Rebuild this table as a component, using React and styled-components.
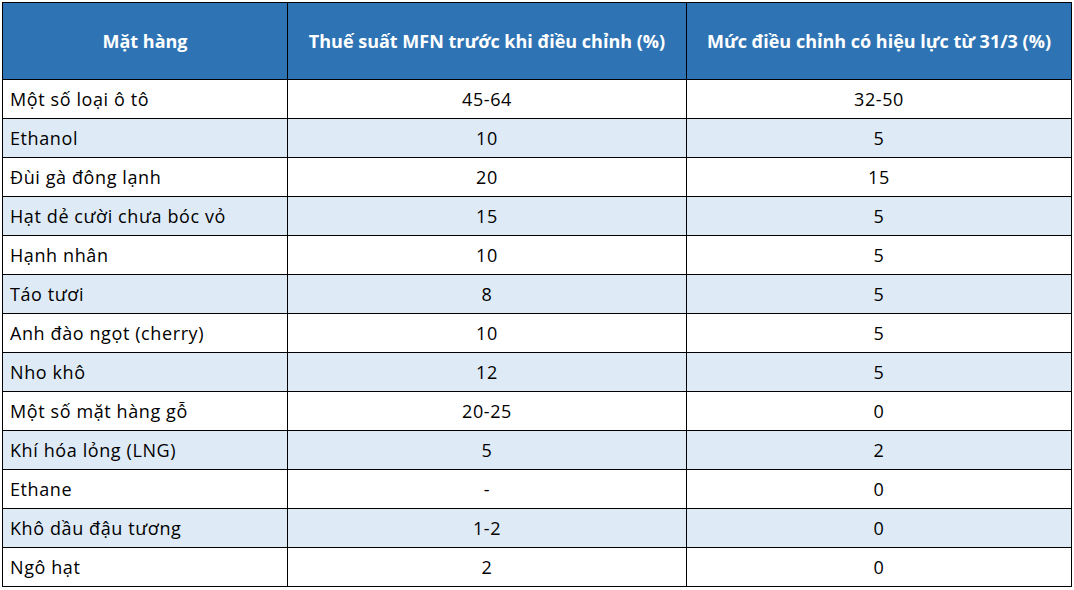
import React from 'react';
import styled, { createGlobalStyle } from 'styled-components';

const GlobalStyle = createGlobalStyle`
  html, body {
    margin: 0;
    padding: 0;
    background: #ffffff;
  }
  body {
    font-family: "Open Sans", "Liberation Sans", sans-serif;
  }
`;

const Page = styled.div`
  padding: 2px 0 0 2px;
`;

const Table = styled.table`
  width: 1069px;
  border-collapse: collapse;
  table-layout: fixed;
  font-family: "Open Sans", "Noto Sans", sans-serif;
  font-size: 18px;
  color: #000;
`;

const HeadCell = styled.th`
  height: 76px;
  padding: 0 6px;
  background-color: #2e74b5;
  color: #ffffff;
  font-weight: 700;
  text-align: center;
  vertical-align: middle;
  border: 1px solid #000;
`;

const Row = styled.tr`
  background-color: ${({ $shaded }) => ($shaded ? '#deeaf6' : '#ffffff')};
`;

const Cell = styled.td`
  height: 38px;
  padding: 0 ${({ $align }) => ($align === 'left' ? '7px' : '6px')};
  text-align: ${({ $align }) => $align || 'center'};
  vertical-align: middle;
  border: 1px solid #000;
  white-space: nowrap;
  letter-spacing: 0.6px;
`;

const rows = [
  { item: 'Một số loại ô tô', before: '45-64', after: '32-50' },
  { item: 'Ethanol', before: '10', after: '5' },
  { item: 'Đùi gà đông lạnh', before: '20', after: '15' },
  { item: 'Hạt dẻ cười chưa bóc vỏ', before: '15', after: '5' },
  { item: 'Hạnh nhân', before: '10', after: '5' },
  { item: 'Táo tươi', before: '8', after: '5' },
  { item: 'Anh đào ngọt (cherry)', before: '10', after: '5' },
  { item: 'Nho khô', before: '12', after: '5' },
  { item: 'Một số mặt hàng gỗ', before: '20-25', after: '0' },
  { item: 'Khí hóa lỏng (LNG)', before: '5', after: '2' },
  { item: 'Ethane', before: '-', after: '0' },
  { item: 'Khô dầu đậu tương', before: '1-2', after: '0' },
  { item: 'Ngô hạt', before: '2', after: '0' },
];

export default function App() {
  return (
    <Page>
      <GlobalStyle />
      <Table>
        <colgroup>
          <col style={{ width: 285 }} />
          <col style={{ width: 399 }} />
          <col style={{ width: 385 }} />
        </colgroup>
        <thead>
          <tr>
            <HeadCell>Mặt hàng</HeadCell>
            <HeadCell>Thuế suất MFN trước khi điều chỉnh (%)</HeadCell>
            <HeadCell>Mức điều chỉnh có hiệu lực từ 31/3 (%)</HeadCell>
          </tr>
        </thead>
        <tbody>
          {rows.map((r, i) => (
            <Row key={r.item} $shaded={i % 2 === 1}>
              <Cell $align="left">{r.item}</Cell>
              <Cell>{r.before}</Cell>
              <Cell>{r.after}</Cell>
            </Row>
          ))}
        </tbody>
      </Table>
    </Page>
  );
}
